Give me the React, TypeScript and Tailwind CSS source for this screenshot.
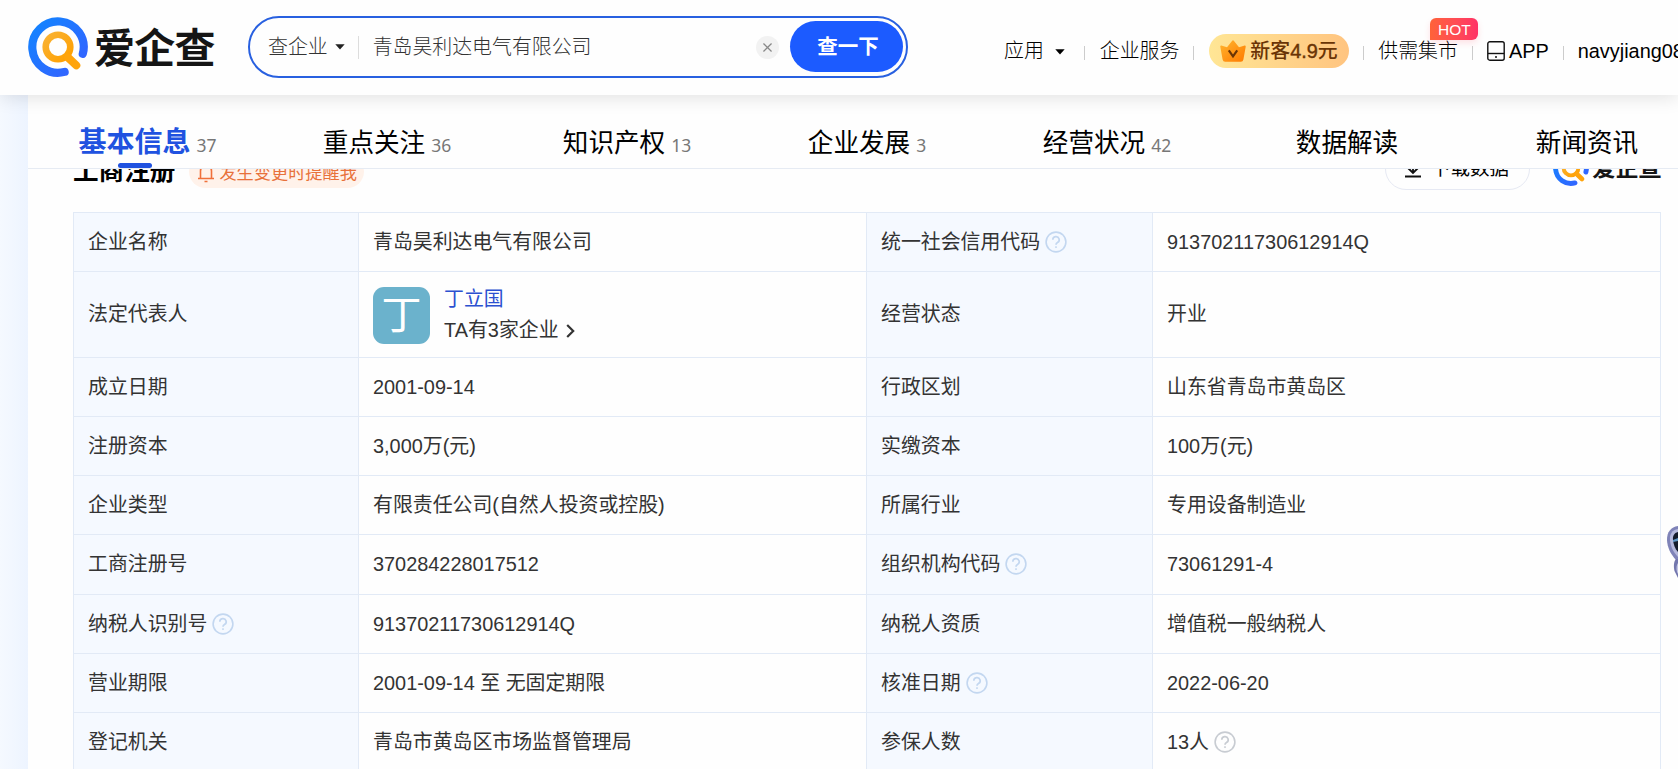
import React from "react";

const cjk = "font-['Liberation_Sans','Noto_Sans_CJK_SC',sans-serif]";

type Row = { h: string; a: string; ah?: boolean; b: string; c: string; ch?: boolean; d: string; dh?: boolean };

const rows: Row[] = [
  { h: "h-[59px]", a: "企业名称", b: "青岛昊利达电气有限公司", c: "统一社会信用代码", ch: true, d: "91370211730612914Q" },
  { h: "h-[86px]", a: "法定代表人", b: "", c: "经营状态", d: "开业" },
  { h: "h-[59px]", a: "成立日期", b: "2001-09-14", c: "行政区划", d: "山东省青岛市黄岛区" },
  { h: "h-[59px]", a: "注册资本", b: "3,000万(元)", c: "实缴资本", d: "100万(元)" },
  { h: "h-[59px]", a: "企业类型", b: "有限责任公司(自然人投资或控股)", c: "所属行业", d: "专用设备制造业" },
  { h: "h-[60px]", a: "工商注册号", b: "370284228017512", c: "组织机构代码", ch: true, d: "73061291-4" },
  { h: "h-[59px]", a: "纳税人识别号", ah: true, b: "91370211730612914Q", c: "纳税人资质", d: "增值税一般纳税人" },
  { h: "h-[59px]", a: "营业期限", b: "2001-09-14 至 无固定期限", c: "核准日期", ch: true, d: "2022-06-20" },
  { h: "h-[59px]", a: "登记机关", b: "青岛市黄岛区市场监督管理局", c: "参保人数", d: "13人", dh: true },
];

const tabs = [
  { t: "基本信息", n: "37", active: true },
  { t: "重点关注", n: "36" },
  { t: "知识产权", n: "13" },
  { t: "企业发展", n: "3" },
  { t: "经营状况", n: "42" },
  { t: "数据解读", n: "" },
  { t: "新闻资讯", n: "" },
];

function Mark({ className, id }: { className: string; id: string }) {
  return (
    <svg viewBox="0 0 60 60" className={className} fill="none" strokeLinecap="round">
      <defs>
        <linearGradient id={id} x1="0" y1="0" x2="1" y2="1">
          <stop offset="0" stopColor="#1285ff" />
          <stop offset="1" stopColor="#3760ff" />
        </linearGradient>
        <linearGradient id={id + "o"} x1="0" y1="0" x2="1" y2="1">
          <stop offset="0" stopColor="#f9b233" />
          <stop offset="1" stopColor="#ffa000" />
        </linearGradient>
      </defs>
      <path d="M36.6 55.1A25.7 25.7 0 1 1 54.8 37" transform="translate(0 -.2)" stroke={`url(#${id})`} strokeWidth="8.2" />
      <circle cx="30" cy="30" r="12.3" stroke={`url(#${id}o)`} strokeWidth="6.6" />
      <path d="M40 40.5L48.3 48.3" stroke="#ffa40c" strokeWidth="8" />
    </svg>
  );
}

function Help({ gray }: { gray?: boolean }) {
  return (
    <svg viewBox="0 0 22 22" className={`mb-[2px] ml-[5px] h-[22px] w-[22px] shrink-0 ${gray ? "text-[#c8ccd2]" : "text-[#c3d7f0]"}`} fill="none" stroke="currentColor" strokeWidth="1.6">
      <circle cx="11" cy="11" r="9.9" />
      <path d="M7.8 8.7a3.2 3.1 0 1 1 4.7 2.7c-1.1.6-1.5 1-1.5 2.3" strokeWidth="1.7" />
      <circle cx="11" cy="16.1" r=".6" fill="currentColor" strokeWidth=".8" />
    </svg>
  );
}

function Caret({ className }: { className: string }) {
  return (
    <svg viewBox="0 0 10 6" className={`shrink-0 ${className}`} fill="currentColor">
      <path d="M.3.3h9.4L5 5.6z" />
    </svg>
  );
}

function Sep({ className }: { className: string }) {
  return <span className={`mt-[4px] h-[14px] w-px shrink-0 bg-[#ccc] ${className}`} />;
}

function Header() {
  return (
    <header className="relative z-20 flex h-[95px] items-start bg-[#fefefe] whitespace-nowrap shadow-[0_2px_18px_rgba(0,0,0,0.12)]">
      <div className="ml-7 flex w-[188px] shrink-0 items-start pt-[17px]">
        <Mark className="h-[60px] w-[60px] shrink-0" id="lg" />
        <span className="ml-[6px] pt-[2px] text-[41px] leading-[60px] font-bold tracking-[-0.7px] text-[#151515]">爱企查</span>
      </div>
      <div className="mt-4 ml-[32px] flex h-[62px] w-[660px] shrink-0 items-center rounded-full border-2 border-[#2860e0] pr-[3px] pl-[18px] text-[19.9px] text-[#333]">
        <span className="pt-[2px] font-light">查企业</span>
        <Caret className="ml-[7px] h-[6px] w-[10px] text-[#222]" />
        <span className="ml-[13px] h-[23px] w-px bg-[#ddd]" />
        <span className="ml-[14px] pt-[2px] font-light">青岛昊利达电气有限公司</span>
        <span className="ml-auto flex h-[23px] w-[23px] items-center justify-center rounded-full bg-[#f2f2f2]">
          <svg viewBox="0 0 10 10" className="h-[9px] w-[9px]" stroke="#888" strokeWidth="1.4"><path d="M.5.5l9 9M9.5.5l-9 9" /></svg>
        </span>
        <button className="mb-px ml-[11px] h-[51px] w-[113px] rounded-full bg-[#1c5bff] pt-[2px] pl-[3px] text-[20.5px] font-bold text-white">查一下</button>
      </div>
      <nav className="mt-[34px] ml-[96px] flex h-[34px] w-[675px] shrink-0 items-center text-[19.9px] text-black">
        <span className="shrink-0 pt-[2px] font-light">应用</span>
        <Caret className="mt-[2px] ml-[11px] h-[6px] w-[10px]" />
        <Sep className="ml-[19px]" />
        <span className="ml-[15px] shrink-0 pt-[2px] font-light">企业服务</span>
        <Sep className="ml-[14px]" />
        <span className="ml-[15px] flex h-[34px] w-[140px] shrink-0 items-center rounded-full bg-linear-to-r from-[#ffe695] to-[#ffc480] pl-[11px] font-medium text-[#6a3405]">
          <svg viewBox="0 0 26 22" className="mr-[4px] h-[22px] w-[26px] shrink-0">
            <defs>
              <linearGradient id="cr" x1="0" y1="0" x2="1" y2="1"><stop offset="0" stopColor="#ffb52e" /><stop offset="1" stopColor="#ff7a00" /></linearGradient>
            </defs>
            <path d="M1.3 5.600L7 7.200 12 .9q1-1.100 2 0l5 6.300 5.700-1.600q1.200-.1 1 1.100L23.400 19.400q-.4 2.300-2.600 2.300H5.200Q3 21.700 2.600 19.400L.3 6.700q-.2-1.200 1-1.100z" fill="url(#cr)" />
            <path d="M8.800 10.300l4.200 6 4.200-6" fill="none" stroke="#6a3405" strokeWidth="2.200" />
          </svg>
          <span className="pt-px">新客<span className="[-webkit-text-stroke:0.4px_#6a3405]">4.9</span>元</span>
        </span>
        <Sep className="ml-[14px]" />
        <span className="relative ml-[14px] shrink-0 pt-[2px] font-light">
          供需集市
          <span className="absolute -top-[17px] left-[52px] flex h-[22px] w-[48px] items-center justify-center rounded-[6px] rounded-bl-none bg-linear-to-r from-[#ff6238] to-[#ff3166] pt-px text-[15.5px] leading-none font-normal text-white shadow-[0_3px_6px_rgba(255,60,90,0.15)]">HOT</span>
        </span>
        <Sep className="ml-[14px]" />
        <svg viewBox="0 0 18 20" className="ml-[14px] h-[20px] w-[18px] shrink-0" fill="none" stroke="#111" strokeWidth="1.400">
          <rect x=".8" y=".8" width="16.400" height="18.400" rx="2" /><path d="M1 12.500h16" /><circle cx="9" cy="16" r="1" fill="#111" stroke="none" />
        </svg>
        <span className="ml-[4px] pt-px">APP</span>
        <Sep className="ml-[14px]" />
        <span className="ml-[14px] pt-px">navyjiang08</span>
      </nav>
    </header>
  );
}

export default function App() {
  return (
    <div className={`h-[769px] w-[1678px] overflow-hidden bg-linear-to-r from-[#f5f9ff] to-[#edf4ff] to-[28px] ${cjk}`}>
      <Header />
      <main className="relative ml-7 h-[674px] bg-[#fefefe] whitespace-nowrap">
        <div className="relative z-10 flex h-[74px] w-[1650px] overflow-hidden border-b border-[#e6ebf3] bg-[#fefefe]">
          {tabs.map((t) => (
            <div key={t.t} className={`relative flex w-[240px] shrink-0 items-baseline justify-center leading-[38px] ${t.active ? "pt-[29px]" : "pt-[29px]"}`}>
              <span className={t.active ? "-ml-px text-[28px] font-bold text-[#2052e0]" : "-ml-[2px] text-[25.600px] font-normal text-black"}>{t.t}</span>
              {t.n && <span className="ml-[6px] font-['Noto_Sans'] text-[17.500px] leading-[20px] text-[#777]">{t.n}</span>}
              {t.active && <span className="absolute bottom-0 left-[90px] h-[5px] w-[34px] rounded-full bg-[#2052e0]" />}
            </div>
          ))}
        </div>
        <div className="-mt-[14px] flex h-[57px] items-start pr-[17px] pl-[45px]">
          <h2 className="text-[25.600px] leading-[32px] font-bold text-black">工商注册</h2>
          <span className="ml-[14px] flex h-[33px] w-[175px] shrink-0 items-center rounded-full bg-[#fff2ea] pl-[8px] text-[17.200px] text-[#e8713a]">
            <svg viewBox="0 0 18 20" className="mt-[2px] mr-[4px] h-[20px] w-[18px] shrink-0" fill="none" stroke="#f0703a" strokeWidth="1.600"><path d="M1 15.500h16M3.500 15.500V8a5.500 5.500 0 0 1 11 0v7.500M7.500 18.500h3" /></svg>
            <span className="pt-[4px]">发生变更时提醒我</span>
          </span>
          <span className="-mt-[7px] ml-auto flex h-[42px] w-[145px] items-center rounded-full border border-[#e6e9f3] pl-[18px] text-[19.500px]">
            <svg viewBox="0 0 18 18" className="mr-[9px] h-[18px] w-[18px] shrink-0" fill="none" stroke="#111" strokeWidth="1.800"><path d="M9 1v11M4 8l5 5 5-5M1 16.500h16" /></svg>
            下载数据
          </span>
          <span className="-mt-[5px] ml-[23px] flex items-center">
            <Mark className="h-[36px] w-[36px] shrink-0" id="sm" />
            <span className="ml-[3px] text-[24px] leading-[36px] font-bold tracking-[-1px] text-[#151515]">爱企查</span>
          </span>
        </div>
        <div className="ml-[45px] w-[1588px] border-t border-l border-[#e2eaf6] text-[19.900px] text-[#333]">
          {rows.map((r) => (
            <div key={r.a} className={`grid grid-cols-[285px_508px_286px_508px] *:flex *:items-center *:border-r *:border-b *:border-[#e2eaf6] *:pt-px *:pl-[14px] ${r.h}`}>
              <div className="bg-[#f5f9ff]">{r.a}{r.ah && <Help />}</div>
              <div>
                {r.b || (
                  <>
                    <span className="flex h-[57px] w-[57px] items-center justify-center rounded-[11px] bg-[#6bb2cc] text-[40px] leading-none text-white">丁</span>
                    <span className="ml-[14px] flex flex-col leading-[31px]">
                      <span className="text-[#2b50d0]">丁立国</span>
                      <span className="flex items-center">
                        TA有3家企业
                        <svg viewBox="0 0 9 14" className="ml-[7px] h-[14px] w-[9px]" fill="none" stroke="#333" strokeWidth="2.200"><path d="M1.200 1l6 6-6 6" /></svg>
                      </span>
                    </span>
                  </>
                )}
              </div>
              <div className="bg-[#f5f9ff]">{r.c}{r.ch && <Help />}</div>
              <div>{r.d}{r.dh && <Help gray />}</div>
            </div>
          ))}
        </div>
        <svg viewBox="0 0 12 58" className="absolute top-[430px] right-0 h-[58px] w-[12px]">
          <path d="M12 1C5 2 .8 7 1 15c.2 7 3.500 14 9 20l2 1z" fill="#7f83b8" />
          <path d="M12 4C6 5 3.500 9 4 15s3 12 8 17z" fill="#b5b8dc" />
          <path d="M12 7C8 8 6.500 11 7 15s2 9 5 12z" fill="#141b2b" />
          <path d="M7 15l5-2v3l-5 1z" fill="#5e95c4" />
          <path d="M10 34c-2.500 3-2.500 8-1.500 12l3.500 7V34z" fill="#7377ae" />
          <path d="M12 38c-1.500 2-2 5-1 9l1 2z" fill="#c2c5e4" />
        </svg>
      </main>
    </div>
  );
}
